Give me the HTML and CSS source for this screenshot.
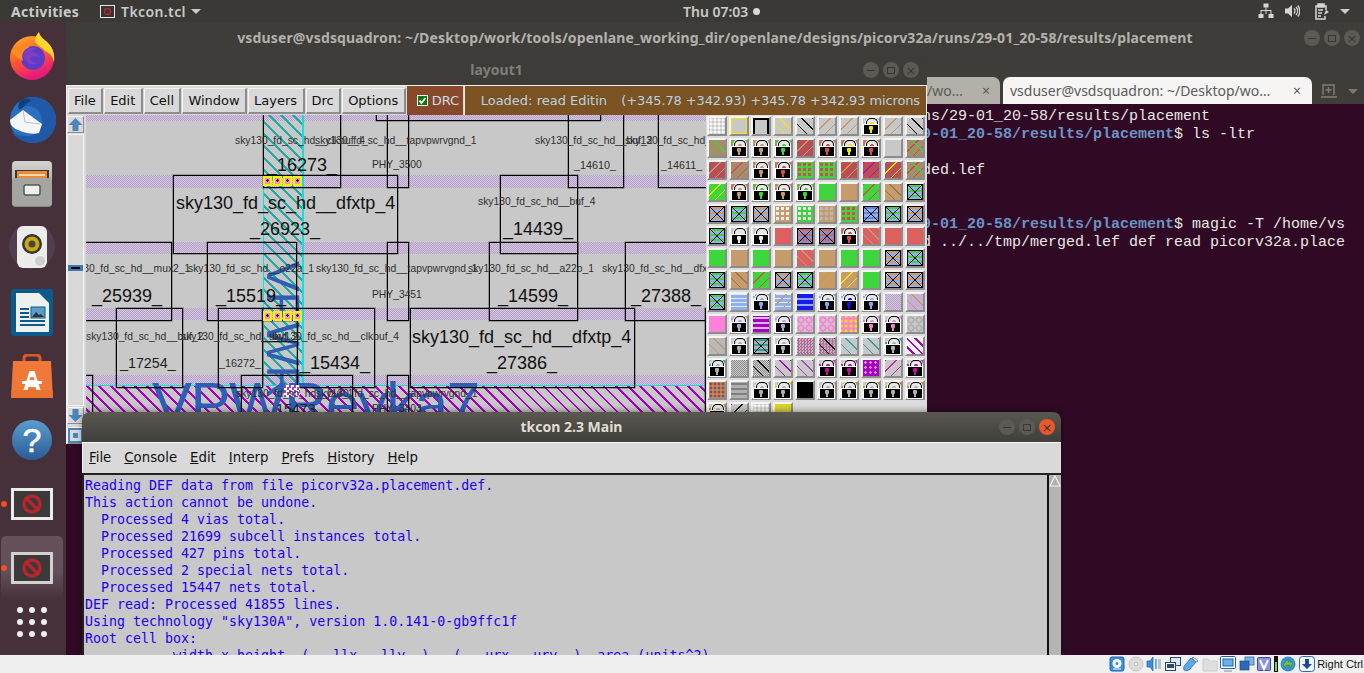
FILE: index.html
```html
<!DOCTYPE html>
<html lang="en">
  <head>
    <meta charset="UTF-8" />
    <title>Tkcon.tcl</title>
    <link rel="stylesheet" href="styles.css">
  </head>
  <body>
    <div class="screen">
      <header class="topbar">
        <span class="activities">Activities</span>
        <span class="app-menu">
          <svg width="15" height="13" viewBox="0 0 15 13"><rect x="0.5" y="0.5" width="14" height="12" fill="#333" stroke="#e8e8e8"/><circle cx="7.5" cy="6.5" r="3" fill="none" stroke="#b8242c" stroke-width="1.5"/></svg>
          Tkcon.tcl
          <i class="caret"></i>
        </span>
        <span class="clock">Thu 07:03<i class="clock-dot"></i></span>
        <span class="tray">
          <svg width="16" height="16" viewBox="0 0 16 16" fill="#d6d6d6"><rect x="5.5" y="0.5" width="5" height="4"/><rect x="0.5" y="11" width="5" height="4"/><rect x="10.5" y="11" width="5" height="4"/><path d="M7.5 4.5h1V7h5v4h-1V8H8.5v3h-1V8H3.5v3h-1V7h5z"/></svg>
          <svg width="16" height="16" viewBox="0 0 16 16" fill="none" stroke="#d6d6d6"><path d="M1 5.5h3L8 2v12l-4-3.500H1z" fill="#d6d6d6" stroke="none"/><path d="M10 5.500a3.500 3.500 0 0 1 0 5M12 4a6 6 0 0 1 0 8M13.800 2.500a8.500 8.500 0 0 1 0 11" stroke-width="1.300"/></svg>
          <svg width="16" height="17" viewBox="0 0 16 17" fill="none" stroke="#d6d6d6" stroke-width="1.500"><path d="M4 3H2v13h9v-3M10 3h2v4"/><rect x="4" y="1" width="6" height="3" fill="#d6d6d6"/><path d="M4 7h5M4 10h4M4 13h3"/><path d="M10 12l5-3-3-2z" fill="#d6d6d6" stroke="none"/></svg>
          <i class="caret"></i>
        </span>
      </header>

      <div class="desk">
        <nav class="dock">
          <div class="dock-item">
            <svg width="48" height="50" viewBox="0 0 48 50">
              <defs><linearGradient id="ffa" x1="0" y1="0" x2="0.4" y2="1"><stop offset="0" stop-color="#ffb52a"/><stop offset="0.55" stop-color="#ff5a2c"/><stop offset="1" stop-color="#e8187c"/></linearGradient></defs>
              <circle cx="24" cy="27" r="22" fill="url(#ffa)"/>
              <path d="M31 1c1 5 5 7 9 11 5 5 7 12 6 19-1-6-5-9-9-11-3-4-9-6-10-10 0-4 2-7 4-9z" fill="#ffd52e"/>
              <circle cx="25" cy="27" r="12" fill="#5d3bc6"/>
              <path d="M17 20c3-4 9-4 12-2-3 0-5 1-6 3 4 0 8 2 9 6-2-2-7-2-10 0 1 3 4 5 8 5-3 2-9 2-12-2-3-3-3-7-1-10z" fill="#7f3fc0"/>
              <path d="M3 21c3-5 6-7 10-8-1 2-1 3 0 4 3-2 6-2 9-1-3 1-6 3-7 6-1 2-1 5 0 8-5-2-9-6-12-9z" fill="#ff8a1f"/>
            </svg>
          </div>
          <div class="dock-item">
            <svg width="48" height="48" viewBox="0 0 48 48">
              <circle cx="25" cy="24" r="23" fill="#2a6fc0"/>
              <path d="M25 1a23 23 0 0 1 20 34c-4 8-12 12-20 12C17 47 8 43 4 36c8 5 20 6 26 0 5-5 5-13 2-19-3-5-8-7-13-7-3 0-6 1-8 3 2-7 7-12 14-12z" fill="#1f5aa8"/>
              <path d="M12 5c4-3 9-3 11 0-4 1-6 3-7 6l-5 3c-1-3-1-7 1-9z" fill="#103f80"/>
              <path d="M2 24l13-10 19 14-3 9c-8 2-20-1-26-6-2-2-3-4-3-7z" fill="#f4f6f8"/>
              <path d="M15 14l2 12 15 2" fill="none" stroke="#b8c4d0"/>
            </svg>
          </div>
          <div class="dock-item">
            <svg width="44" height="48" viewBox="0 0 44 48">
              <defs><linearGradient id="cab" x1="0" y1="0" x2="0" y2="1"><stop offset="0" stop-color="#d4d4d0"/><stop offset="1" stop-color="#8a8a86"/></linearGradient></defs>
              <rect x="2" y="1" width="40" height="46" rx="4" fill="url(#cab)"/>
              <rect x="5" y="10" width="34" height="12" fill="#3c3836"/>
              <rect x="7" y="11" width="30" height="7" fill="#e88c3c"/>
              <rect x="9" y="14" width="26" height="2" fill="#f8d8a8"/>
              <rect x="2" y="18" width="40" height="28" rx="3" fill="#a4a4a0"/>
              <rect x="14" y="25" width="16" height="10" rx="2" fill="#f0f0ec" stroke="#555" stroke-width="1.500"/>
            </svg>
          </div>
          <div class="dock-item">
            <svg width="48" height="44" viewBox="0 0 48 44">
              <circle cx="24" cy="20" r="23" fill="#5a4a66" opacity="0.5"/>
              <rect x="9" y="0" width="30" height="42" rx="6" fill="#ececea"/>
              <circle cx="24" cy="18" r="10" fill="#38362e"/>
              <circle cx="24" cy="18" r="7.500" fill="#c8a818"/>
              <circle cx="24" cy="18" r="3.500" fill="#4a4638"/>
              <circle cx="32" cy="35" r="5" fill="#cfcfcb"/>
            </svg>
          </div>
          <div class="dock-item">
            <svg width="42" height="48" viewBox="0 0 42 48">
              <path d="M3 1h36a3 3 0 0 1 3 3v41a3 3 0 0 1-3 3H3a3 3 0 0 1-3-3V4a3 3 0 0 1 3-3z" fill="#0a5a8c"/>
              <path d="M5 5h23l10 10v29H5z" fill="#eef0ee"/>
              <path d="M28 1h11a3 3 0 0 1 3 3v11z" fill="#0a5a8c"/>
              <rect x="9" y="20" width="9" height="2" fill="#0a5a8c"/><rect x="9" y="24" width="9" height="2" fill="#0a5a8c"/><rect x="9" y="28" width="9" height="2" fill="#0a5a8c"/>
              <rect x="9" y="32" width="25" height="2" fill="#0a5a8c"/><rect x="9" y="36" width="25" height="2" fill="#0a5a8c"/>
              <rect x="20" y="19" width="14" height="11" fill="#5a9cc8" stroke="#0a5a8c"/>
              <path d="M21 29l4-5 3 3 2-1 3 3z" fill="#333"/>
            </svg>
          </div>
          <div class="dock-item">
            <svg width="44" height="44" viewBox="0 0 44 44">
              <path d="M14 9V5q0-4 4-4h8q4 0 4 4v4" fill="none" stroke="#d85a28" stroke-width="3"/>
              <path d="M3 7h38l2 38H1z" fill="#f07838"/>
              <path d="M1 36h42v9H1z" fill="#e87030" opacity="0.7"/>
              <path d="M19.500 17h5l6 19h-4l-1-3H18.500l-1 3h-4zM20.500 23l-1 3h5l-1-3z" fill="#fff"/>
              <rect x="12" y="27" width="20" height="3" fill="#fff"/>
            </svg>
          </div>
          <div class="dock-item">
            <svg width="42" height="42" viewBox="0 0 42 42">
              <defs><linearGradient id="hlp" x1="0" y1="0" x2="0" y2="1"><stop offset="0" stop-color="#5a9cd0"/><stop offset="1" stop-color="#2a5c94"/></linearGradient></defs>
              <circle cx="21" cy="21" r="20" fill="url(#hlp)"/>
              <text x="21" y="33" text-anchor="middle" class="help-mark">?</text>
            </svg>
          </div>
          <div class="dock-item">
            <i class="run-dot"></i>
            <svg width="42" height="32" viewBox="0 0 42 32"><rect x="1.500" y="1.500" width="39" height="29" fill="#3a3a3a" stroke="#ececec" stroke-width="3"/><circle cx="21" cy="16" r="8" fill="none" stroke="#b8242c" stroke-width="3.500"/><path d="M15.500 10.500l11 11" stroke="#b8242c" stroke-width="3.500"/></svg>
          </div>
          <div class="dock-item active">
            <i class="run-dot"></i>
            <svg width="42" height="32" viewBox="0 0 42 32"><rect x="1.500" y="1.500" width="39" height="29" fill="#3a3a3a" stroke="#d4d0d0" stroke-width="3"/><circle cx="21" cy="16" r="8" fill="none" stroke="#b8242c" stroke-width="3.500"/><path d="M15.500 10.500l11 11" stroke="#b8242c" stroke-width="3.500"/></svg>
          </div>
          <div class="dock-grid">
            <svg width="32" height="32" viewBox="0 0 32 32" fill="#eeeeee"><circle cx="4" cy="4" r="3"/><circle cx="16" cy="4" r="3"/><circle cx="28" cy="4" r="3"/><circle cx="4" cy="16" r="3"/><circle cx="16" cy="16" r="3"/><circle cx="28" cy="16" r="3"/><circle cx="4" cy="28" r="3"/><circle cx="16" cy="28" r="3"/><circle cx="28" cy="28" r="3"/></svg>
          </div>
        </nav>

        <main class="workspace">
          <!-- terminal at the back, the other two windows sit on it -->
          <section class="terminal">
            <div class="term-title">
              <span class="term-name">vsduser@vsdsquadron: ~/Desktop/work/tools/openlane_working_dir/openlane/designs/picorv32a/runs/29-01_20-58/results/placement</span>
              <span class="win-btns">
                <i class="win-btn"><b class="glyph-min"></b></i>
                <i class="win-btn"><b class="glyph-max"></b></i>
                <i class="win-btn"><b class="glyph-close">×</b></i>
              </span>
            </div>
            <div class="term-tabs">
              <div class="tab tab-off"><span>/wo…</span><span class="tab-x">×</span></div>
              <div class="tab tab-on"><span>vsduser@vsdsquadron: ~/Desktop/wo…</span><span class="tab-x">×</span></div>
              <svg class="tab-new" width="16" height="16" viewBox="0 0 16 16" fill="none" stroke="#807e78" stroke-width="1.500"><path d="M2 12V2h11v10M0 14h16M7.500 4v6M4.500 7h6"/></svg>
              <i class="caret caret-dim"></i>
            </div>
            <pre class="term-out">ns/29-01_20-58/results/placement
<b>9-01_20-58/results/placement</b>$ ls -ltr

ded.lef


<b>9-01_20-58/results/placement</b>$ magic -T /home/vs
d ../../tmp/merged.lef def read picorv32a.place</pre>
          </section>

          <section class="layout-win">
            <div class="win-title">
              <span class="win-name">layout1</span>
              <span class="win-btns">
                <i class="win-btn"><b class="glyph-min"></b></i>
                <i class="win-btn"><b class="glyph-max"></b></i>
                <i class="win-btn"><b class="glyph-close">×</b></i>
              </span>
            </div>
            <div class="magic-bar">
              <span class="mbtn">File</span>
              <span class="mbtn">Edit</span>
              <span class="mbtn">Cell</span>
              <span class="mbtn">Window</span>
              <span class="mbtn">Layers</span>
              <span class="mbtn">Drc</span>
              <span class="mbtn">Options</span>
              <span class="drc-btn">
                <svg width="11" height="11" viewBox="0 0 11 11"><rect x="0.500" y="0.500" width="10" height="10" fill="#0a7a10" stroke="#f2f2f2"/><path d="M2.500 5.500l2 2.500 4-5" fill="none" stroke="#fff" stroke-width="1.800"/></svg>
                DRC
              </span>
              <span class="info-bar"><span>Loaded: read Editin</span><span class="info-pos">(+345.78 +342.93) +345.78 +342.93 microns</span></span>
            </div>
            <div class="magic-body">
              <div class="scroll-col">
                <span class="sbtn"><svg width="15" height="15" viewBox="0 0 15 15"><path d="M7.500 1l7 7h-4v6h-6V8h-4z" fill="#4a86bc"/></svg></span>
                <div class="strough"><i class="smark"></i></div>
                <span class="sbtn"><svg width="15" height="15" viewBox="0 0 15 15"><path d="M7.500 14l7-7h-4V1h-6v6h-4z" fill="#4a86bc"/></svg></span>
                <span class="sbtn sbtn-zoom"><svg width="15" height="15" viewBox="0 0 15 15"><rect x="1" y="1" width="13" height="13" fill="none" stroke="#4a86bc" stroke-width="2"/><rect x="5" y="5" width="5" height="5" fill="#4a86bc"/></svg></span>
              </div>

              <div class="canvas">
                <i class="rail rail-1"></i>
                <i class="rail rail-2"></i>
                <i class="rail rail-3"></i>
                <i class="rail rail-4"></i>
                <i class="rail rail-5"></i>
                <i class="met-strip"></i>
                <i class="met-floor"></i>

                <span class="vtext">VPWR</span>
                <span class="floor-text">VPWReyka7</span>

                <i class="cell c-16273"></i>
                <i class="cell c-top1"></i>
                <i class="cell c-tap1"></i>
                <i class="cell c-26923"></i>
                <i class="cell c-14610"></i>
                <i class="cell c-14611"></i>
                <i class="cell c-14439"></i>
                <i class="cell c-14599"></i>
                <i class="cell c-27388"></i>
                <i class="cell c-25939"></i>
                <i class="cell c-15519"></i>
                <i class="cell c-tap2"></i>
                <i class="cell c-17254"></i>
                <i class="cell c-16272"></i>
                <i class="cell c-mid"></i>
                <i class="cell c-15434"></i>
                <i class="cell c-15473"></i>
                <i class="cell c-tap3"></i>
                <i class="cell c-edge"></i>
                <i class="cell c-27386"></i>
                <i class="cell c-right"></i>

                <span class="vias vias-1"><i></i><i></i><i></i><i></i></span>
                <span class="vias vias-2"><i></i><i></i><i></i><i></i></span>
                <span class="pin-mark"></span>

                <span class="lab t1">sky130_fd_sc_hd__clkbuf_4</span>
                <span class="lab t2">sky130_fd_sc_hd__tapvpwrvgnd_1</span>
                <span class="lab t3">sky130_fd_sc_hd__buf_2</span>
                <span class="lab t4">sky130_fd_sc_hd__dfxtp_4</span>
                <span class="lab t5">PHY_3500</span>
                <span class="lab lab-id t6">_14610_</span>
                <span class="lab lab-id t7">_14611_</span>
                <span class="lab t8">sky130_fd_sc_hd__buf_4</span>
                <span class="lab t9">sky130_fd_sc_hd__mux2_1</span>
                <span class="lab t10">sky130_fd_sc_hd__o22a_1</span>
                <span class="lab t11">sky130_fd_sc_hd__tapvpwrvgnd_1</span>
                <span class="lab t12">sky130_fd_sc_hd__a22o_1</span>
                <span class="lab t13">sky130_fd_sc_hd__dfxtp_4</span>
                <span class="lab t14">PHY_3451</span>
                <span class="lab t15">sky130_fd_sc_hd__buf_2</span>
                <span class="lab t16">sky130_fd_sc_hd__buf_2</span>
                <span class="lab t17">sky130_fd_sc_hd__clkbuf_4</span>
                <span class="lab lab-id t18">_16272_</span>
                <span class="lab t19">sky130_fd_sc_hd__buf_1</span>
                <span class="lab t20">sky130_fd_sc_hd__tapvpwrvgnd_1</span>
                <span class="lab t21">PHY_3403</span>
                <span class="lab lab-md t22">_17254_</span>
                <span class="lab lab-md t23">_15473_</span>
                <span class="lab lab-lg t24">_16273_</span>
                <span class="lab lab-lg t25">sky130_fd_sc_hd__dfxtp_4</span>
                <span class="lab lab-lg t26">_26923_</span>
                <span class="lab lab-lg t27">_14439_</span>
                <span class="lab lab-lg t28">_25939_</span>
                <span class="lab lab-lg t29">_15519_</span>
                <span class="lab lab-lg t30">_14599_</span>
                <span class="lab lab-lg t31">_27388_</span>
                <span class="lab lab-lg t32">_15434_</span>
                <span class="lab lab-lg t33">sky130_fd_sc_hd__dfxtp_4</span>
                <span class="lab lab-lg t34">_27386_</span>
              </div>

              <div class="palette">
                <i class="sw dots"></i><i class="sw ybox"></i><i class="sw kbox"></i><i class="sw hb h-y"></i><i class="sw hb h-k"></i><i class="sw hf h-t"></i><i class="sw hf h-t"></i><i class="sw lk h-y"></i><i class="sw hf h-t"></i><i class="sw hb h-k"></i>
                <i class="sw b-brown hb h-g"></i><i class="sw lk sp-g h-t"></i><i class="sw lk sp-t h-t"></i><i class="sw lk sp-g h-g"></i><i class="sw b-dkred hf h-t"></i><i class="sw lk sp-r h-r"></i><i class="sw lk sp-r h-y"></i><i class="sw lk sp-r h-r"></i><i class="sw"></i><i class="sw b-brown hx h-g"></i>
                <i class="sw b-dkred hf h-t"></i><i class="sw b-brown hf h-r"></i><i class="sw lk sp-t h-t"></i><i class="sw lk sp-r h-r"></i><i class="sw b-green rdots"></i><i class="sw b-green rdots"></i><i class="sw b-dkred hf h-o"></i><i class="sw b-dkred hf h-m"></i><i class="sw b-dkred hf h-y"></i><i class="sw b-brown hx h-g"></i>
                <i class="sw b-green hf h-y"></i><i class="sw lk sp-r h-t"></i><i class="sw lk sp-g h-g"></i><i class="sw lk sp-t h-t"></i><i class="sw lk sp-g h-g"></i><i class="sw b-green"></i><i class="sw b-tan"></i><i class="sw b-green hf h-r"></i><i class="sw b-tan hb h-dt"></i><i class="sw xb xg"></i>
                <i class="sw xb xo"></i><i class="sw xb xg"></i><i class="sw xb xo"></i><i class="sw b-tan wdots"></i><i class="sw b-green wdots"></i><i class="sw b-tan gdots"></i><i class="sw b-green rdots"></i><i class="sw xb xb2"></i><i class="sw xb xg"></i><i class="sw xb xo"></i>
                <i class="sw xb xg"></i><i class="sw lk h-w"></i><i class="sw lk h-w"></i><i class="sw b-coral"></i><i class="sw xb xr"></i><i class="sw xb xr"></i><i class="sw lk sp-r h-r"></i><i class="sw b-coral hb h-t"></i><i class="sw b-coral"></i><i class="sw b-coral"></i>
                <i class="sw b-green"></i><i class="sw b-tan"></i><i class="sw b-green"></i><i class="sw b-tan"></i><i class="sw b-coral hb h-t"></i><i class="sw b-tan"></i><i class="sw b-green"></i><i class="sw b-green"></i><i class="sw xb xo"></i><i class="sw xb xg"></i>
                <i class="sw xb xg"></i><i class="sw b-tan hb h-dt"></i><i class="sw b-green hf h-r"></i><i class="sw xb xo"></i><i class="sw xb xg"></i><i class="sw b-tan hf h-o"></i><i class="sw b-tan hf h-y"></i><i class="sw b-green"></i><i class="sw xb xo"></i><i class="sw xb xo"></i>
                <i class="sw xb xg"></i><i class="sw b-blue waves"></i><i class="sw lk sp-b h-b"></i><i class="sw b-blue waves hf h-t"></i><i class="sw deep"></i><i class="sw lk sp-b h-b"></i><i class="sw lk sp-b h-db"></i><i class="sw lk sp-b h-b"></i><i class="sw b-lilac"></i><i class="sw b-lilac hb h-t"></i>
                <i class="sw pinkfill"></i><i class="sw lk sp-l h-l"></i><i class="sw purplewave"></i><i class="sw lk sp-l h-l"></i><i class="sw rings"></i><i class="sw rings"></i><i class="sw yellowpink"></i><i class="sw lk sp-p h-p"></i><i class="sw lk sp-p h-p"></i><i class="sw rings-grey"></i>
                <i class="sw hb h-t dith"></i><i class="sw lk h-gr"></i><i class="sw xb xteal"></i><i class="sw lk h-gr"></i><i class="sw pinkdith"></i><i class="sw pinkdith hb h-k"></i><i class="sw hb h-teal"></i><i class="sw hb h-teal2"></i><i class="sw lk sp-c h-gr"></i><i class="sw magdots"></i>
                <i class="sw lk sp-c h-gr"></i><i class="sw dith2"></i><i class="sw dith2 hb h-k"></i><i class="sw hb h-mag"></i><i class="sw hb h-mag2"></i><i class="sw lk sp-m h-m"></i><i class="sw lk sp-m h-m"></i><i class="sw purplefill"></i><i class="sw hf h-pk"></i><i class="sw lk sp-m h-m"></i>
                <i class="sw orangepurple"></i><i class="sw dith2 waves-grey"></i><i class="sw lk h-gr"></i><i class="sw lk sp-y h-gr"></i><i class="sw b-black"></i><i class="sw lk h-gr"></i><i class="sw lk sp-o h-gr"></i><i class="sw lk sp-o h-gr"></i><i class="sw lk sp-o h-gr"></i><i class="sw lk sp-o h-gr"></i>
                <i class="sw lk sp-o h-gr"></i><i class="sw hf h-k"></i><i class="sw dots"></i><i class="sw ydots"></i>
              </div>
            </div>
          </section>

          <section class="tkcon-win">
            <div class="win-title tk-title">
              <span class="tk-name">tkcon 2.3 Main</span>
              <span class="win-btns">
                <i class="win-btn"><b class="glyph-min"></b></i>
                <i class="win-btn"><b class="glyph-max"></b></i>
                <i class="win-btn win-close"><b class="glyph-close">×</b></i>
              </span>
            </div>
            <div class="tk-menu">
              <span><u>F</u>ile</span>
              <span><u>C</u>onsole</span>
              <span><u>E</u>dit</span>
              <span><u>I</u>nterp</span>
              <span><u>P</u>refs</span>
              <span><u>H</u>istory</span>
              <span><u>H</u>elp</span>
            </div>
            <div class="tk-body">
              <pre class="tk-text">Reading DEF data from file picorv32a.placement.def.
This action cannot be undone.
  Processed 4 vias total.
  Processed 21699 subcell instances total.
  Processed 427 pins total.
  Processed 2 special nets total.
  Processed 15447 nets total.
DEF read: Processed 41855 lines.
Using technology "sky130A", version 1.0.141-0-gb9ffc1f
Root cell box:
           width x height  (   llx,  lly  ),  (   urx,  ury  )  area (units^2)</pre>
              <div class="tk-scroll"><svg width="12" height="12" viewBox="0 0 12 12"><path d="M6 1l5 10H1z" fill="#b0b0b0" stroke="#f2f2f2" stroke-width="1.200"/></svg></div>
            </div>
          </section>
        </main>
      </div>

      <footer class="vbox-bar">
        <svg width="16" height="16" viewBox="0 0 16 16"><rect x="1" y="1" width="14" height="14" rx="2" fill="#3a8fdc" stroke="#1c62a8"/><circle cx="8" cy="7.500" r="4.500" fill="#fff"/><circle cx="8" cy="7.500" r="1.500" fill="#3a8fdc"/><path d="M4 13h8" stroke="#fff"/></svg>
        <svg width="16" height="16" viewBox="0 0 16 16"><circle cx="8" cy="8" r="7" fill="#dcdcdc" stroke="#c4c4c4"/><circle cx="8" cy="8" r="2" fill="#f4f4f4" stroke="#bcbcbc"/></svg>
        <svg width="16" height="16" viewBox="0 0 16 16"><path d="M1 5h3l3-4v14l-3-4H1z" fill="#3a8fdc" stroke="#1c62a8" stroke-width="0.700"/><rect x="9" y="3" width="2" height="10" fill="#6ab0e8"/><rect x="12" y="3" width="3" height="10" fill="#c0c0c0"/></svg>
        <svg width="16" height="16" viewBox="0 0 16 16"><rect x="5.500" y="1.500" width="10" height="8" fill="#dfe8f4" stroke="#2c4a70"/><rect x="0.500" y="6.500" width="10" height="8" fill="#f4f4f4" stroke="#2c4a70"/><rect x="2" y="8" width="7" height="4" fill="#2c4a70"/></svg>
        <svg width="16" height="16" viewBox="0 0 16 16"><path d="M1 14c-1-2 0-4 1-5l6-7 5 4-6 7c-2 2-4 2-6 1z" fill="#5aa8ec" stroke="#1c62a8" stroke-width="0.700"/><path d="M10 1l5 4-2 1-4-4z" fill="#fff" stroke="#1c62a8" stroke-width="0.700"/></svg>
        <svg width="16" height="16" viewBox="0 0 16 16"><path d="M1 3h5l1 2h8v10H1z" fill="#dedede" stroke="#cccccc"/></svg>
        <svg width="16" height="16" viewBox="0 0 16 16"><rect x="0.500" y="0.500" width="15" height="12" rx="1" fill="#fff" stroke="#1c62a8"/><rect x="3" y="3" width="10" height="7" fill="#6ab0e8" stroke="#1c62a8"/><path d="M4 15h8" stroke="#bcbcbc" stroke-width="2"/></svg>
        <svg width="16" height="16" viewBox="0 0 16 16"><rect x="6" y="1" width="9" height="8" fill="#7ab4ec" stroke="#2c5a90" stroke-width="0.700"/><rect x="1" y="5" width="9" height="9" fill="#2c6ab8" stroke="#1c4a80" stroke-width="0.700"/></svg>
        <svg width="14" height="16" viewBox="0 0 14 16"><rect x="0.500" y="1.500" width="13" height="13" rx="1" fill="#8a94dc" stroke="#3c4a9c"/><path d="M3 4l4 9 4-9" fill="none" stroke="#fff" stroke-width="2"/></svg>
        <svg width="4" height="16" viewBox="0 0 4 16"><rect width="4" height="16" fill="#111"/><rect x="1" y="6" width="2" height="9" fill="#7cd81c"/></svg>
        <svg width="16" height="16" viewBox="0 0 16 16"><circle cx="8" cy="8" r="7.500" fill="#3a8fdc"/><path d="M3 9l5-6v3h5l-3 8V9H6v3z" fill="#72c83c" stroke="#3c8a20" stroke-width="0.600"/></svg>
        <svg width="16" height="16" viewBox="0 0 16 16"><rect x="0.500" y="0.500" width="15" height="15" rx="3" fill="#f2f6fc" stroke="#2c6ab8"/><path d="M6 3h4v5h3l-5 5-5-5h3z" fill="#1c4a98"/></svg>
        <span class="host-key">Right Ctrl</span>
      </footer>
    </div>
  </body>
</html>
```
FILE: styles.css
```css
* {
  box-sizing: border-box;
}
html,
body {
  margin: 0;
  height: 100%;
  overflow: hidden;
  background: #300a24;
}
.screen {
  width: 1364px;
  height: 673px;
  display: flex;
  flex-direction: column;
  font-family: "DejaVu Sans", sans-serif;
}

/* top bar */
.topbar {
  height: 22px;
  flex: none;
  background: #3a3935;
  color: #c9cbca;
  display: flex;
  align-items: center;
  font: bold 14px "Noto Sans", sans-serif;
  padding-left: 11px;
  position: relative;
}
.activities {
  letter-spacing: 0.3px;
}
.app-menu {
  display: flex;
  align-items: center;
  gap: 6px;
  margin-left: 21px;
  font-weight: 600;
  letter-spacing: 0.4px;
}
.caret {
  display: inline-block;
  width: 0;
  height: 0;
  border-left: 5px solid transparent;
  border-right: 5px solid transparent;
  border-top: 5px solid #c9cbca;
}
.app-menu .caret {
  margin-left: -1px;
}
.clock {
  position: absolute;
  left: 683px;
  display: flex;
  align-items: center;
  font-weight: 600;
}
.clock-dot {
  width: 7px;
  height: 7px;
  border-radius: 50%;
  background: #d8d8d8;
  margin-left: 5px;
}
.tray {
  margin-left: auto;
  margin-right: 14px;
  display: flex;
  align-items: center;
  gap: 10px;
}
.tray svg:nth-child(3) {
  margin-left: 4px;
}

/* dock */
.desk {
  flex: 1;
  display: flex;
  min-height: 0;
  overflow: hidden;
}
.dock {
  width: 66px;
  flex: none;
  background: #46313b;
  padding-top: 2px;
  display: flex;
  flex-direction: column;
  align-items: stretch;
}
.dock-item {
  height: 64px;
  flex: none;
  display: flex;
  align-items: center;
  justify-content: center;
  position: relative;
  margin-right: 3px;
  margin-left: 1px;
}
.dock-item.active {
  background: linear-gradient(#64505a 0 55%, #46313b);
  border-radius: 5px 5px 0 0;
}
.run-dot {
  position: absolute;
  left: 0;
  top: 29px;
  width: 6px;
  height: 6px;
  border-radius: 50%;
  background: #e95420;
}
.dock-grid {
  height: 44px;
  display: flex;
  align-items: center;
  justify-content: center;
  margin-right: 2px;
}
.help-mark {
  font: 34px "Liberation Sans", sans-serif;
  fill: #fff;
  stroke: #fff;
  stroke-width: 0.6px;
}

/* desktop area */
.workspace {
  flex: 1;
  position: relative;
  min-width: 0;
}
.terminal {
  height: 100%;
  display: flex;
  flex-direction: column;
  background: #300a24;
}
.term-title {
  height: 56px;
  flex: none;
  background: #3e3d39;
  display: flex;
  padding-top: 6px;
  justify-content: center;
  position: relative;
}
.term-name {
  font: bold 14px "Noto Sans", sans-serif;
  letter-spacing: 0.15px;
  color: #b3b1ac;
  line-height: 20px;
}
.win-btns {
  position: absolute;
  right: 4px;
  top: 8px;
  display: flex;
  gap: 4px;
}
.win-btn {
  width: 16px;
  height: 16px;
  border-radius: 50%;
  background: #5b5a55;
  display: flex;
  align-items: center;
  justify-content: center;
  color: #38372f;
}
.glyph-min {
  width: 8px;
  height: 1px;
  background: #38372f;
}
.glyph-max {
  width: 8px;
  height: 7px;
  border: 1px solid #38372f;
}
.glyph-close {
  font: 13px/1 "DejaVu Sans", sans-serif;
}
.win-close {
  background: #e9572a;
}
.term-tabs {
  height: 26px;
  flex: none;
  background: #3e3d39;
  display: flex;
  align-items: flex-end;
  font: 14px "Noto Sans", sans-serif;
  position: relative;
}
.tab {
  height: 27px;
  display: flex;
  align-items: center;
  justify-content: space-between;
  border-radius: 7px 7px 0 0;
  color: #5b5b5b;
}
.tab-off {
  width: 934px;
  background: #b3b0aa;
  padding: 0 10px 0 861px;
}
.tab-on {
  width: 309px;
  margin-left: 3px;
  background: #f6f5f4;
  padding: 0 11px 0 7px;
}
.tab-x {
  font-size: 14px;
}
.tab-new {
  margin: 0 0 5px 9px;
}
.caret-dim {
  border-top-color: #7a7872;
  margin: 0 0 10px 11px;
}
.term-out {
  margin: 0;
  padding: 4px 0 0 856px;
  font: 15px/18px "Liberation Mono", monospace;
  color: #e8e8e4;
}
.term-out b {
  color: #6b94c6;
}

/* magic layout window */
.layout-win {
  position: absolute;
  left: 0;
  top: 33px;
  width: 861px;
  height: 389px;
  display: flex;
  flex-direction: column;
}
.win-title {
  height: 30px;
  flex: none;
  background: #3d3c38;
  border-radius: 8px 8px 0 0;
  display: flex;
  align-items: center;
  justify-content: center;
  position: relative;
}
.win-title .win-btns {
  top: 7px;
  right: 8px;
}
.win-name {
  font: bold 14px "Noto Sans", sans-serif;
  color: #7f7e79;
  margin-top: -1px;
}
.magic-bar {
  height: 30px;
  flex: none;
  background: #d9d9d9;
  border: 1px solid #f2f2f2;
  border-bottom: 0;
  display: flex;
  gap: 1px;
  padding-left: 1px;
  font-size: 13px;
  color: #111;
}
.mbtn {
  display: flex;
  align-items: center;
  margin: 2px 0 1px;
  padding: 0 5.400px 0 5px;
  border-style: solid;
  border-width: 1px 2px 2px 1px;
  border-color: #f4f4f4 #8c8c8c #8c8c8c #f4f4f4;
  background: #d9d9d9;
}
.drc-btn {
  width: 56px;
  flex: none;
  display: flex;
  align-items: center;
  gap: 4px;
  padding-left: 10px;
  background: #864a2b;
  color: #cfdbe4;
}
.info-bar {
  flex: 1;
  display: flex;
  justify-content: space-between;
  align-items: center;
  background: #7b5221;
  color: #b8d2e2;
  padding: 0 6px 0 16px;
  border-left: 1px solid #e8e8e8;
}
.info-pos {
  letter-spacing: -0.12px;
}
.magic-body {
  flex: 1;
  display: flex;
  min-height: 0;
  background: #d9d9d9;
  border-left: 1px solid #f2f2f2;
}
.scroll-col {
  width: 19px;
  flex: none;
  display: flex;
  flex-direction: column;
  padding-top: 1px;
  gap: 1px;
}
.sbtn {
  width: 17px;
  height: 17px;
  flex: none;
  border-style: solid;
  border-width: 1px;
  border-color: #f4f4f4 #8c8c8c #8c8c8c #f4f4f4;
  display: block;
}
.sbtn svg {
  display: block;
}
.sbtn-zoom {
  margin-top: 2px;
}
.strough {
  flex: 1;
  width: 17px;
  border: 1px solid #f4f4f4;
  position: relative;
}
.smark {
  position: absolute;
  left: 0;
  right: 0;
  top: 130px;
  height: 6px;
  background: #3c78b4;
}
.smark::after {
  content: "";
  position: absolute;
  left: 3px;
  right: 3px;
  top: 2px;
  height: 2px;
  background: #000;
}

/* layout canvas, origin 86,115 on the screen */
.canvas {
  width: 620px;
  flex: none;
  position: relative;
  overflow: hidden;
  background: #c8c8c8;
}
.rail {
  position: absolute;
  left: 0;
  right: 0;
  background: repeating-conic-gradient(#b79ed1 0 25%, #d2c8d6 0 50%) 0 0 / 2px 2px;
}
.rail-1 { top: 0; height: 6px; }
.rail-2 { top: 60px; height: 13px; }
.rail-3 { top: 127px; height: 12px; }
.rail-4 { top: 193px; height: 12px; }
.rail-5 { top: 260px; height: 10px; }
.met-strip {
  position: absolute;
  left: 177px;
  top: 0;
  width: 41px;
  height: 270px;
  border-left: 1px solid #10e0dc;
  border-right: 2px solid #10e0dc;
  background: repeating-linear-gradient(45deg, transparent 0 6.500px, #22aaa6 6.500px 8.500px);
}
.met-floor {
  position: absolute;
  left: 0;
  right: 0;
  top: 270px;
  bottom: 0;
  border-top: 1px solid #10e0dc;
  background: #c8c8c8 repeating-linear-gradient(45deg, transparent 0 6.500px, #a800c0 6.500px 8.500px);
}
.vtext {
  position: absolute;
  left: 174px;
  top: 146px;
  font: 46px/46px "Liberation Sans", sans-serif;
  writing-mode: vertical-rl;
  color: #2e5fb4;
}
.floor-text {
  position: absolute;
  left: 66px;
  top: 259px;
  font: 60px/60px "Liberation Sans", sans-serif;
  white-space: nowrap;
  letter-spacing: -1.500px;
  color: #2e5fb4;
}
.cell {
  position: absolute;
  border: 1px solid #000;
  box-shadow: 0 0 0 0.500px rgba(0, 0, 0, 0.5);
}
.c-16273 { left: 177px; top: -20px; width: 78px; height: 93px; }
.c-top1 { left: 290px; top: -20px; width: 225px; height: 26px; }
.c-tap1 { left: 301px; top: -20px; width: 22px; height: 93px; }
.c-26923 { left: 87px; top: 60px; width: 225px; height: 79px; }
.c-14610 { left: 482px; top: -20px; width: 56px; height: 93px; }
.c-14611 { left: 572px; top: -20px; width: 70px; height: 93px; }
.c-14439 { left: 414px; top: 60px; width: 78px; height: 79px; }
.c-14599 { left: 403px; top: 127px; width: 89px; height: 79px; }
.c-27388 { left: 539px; top: 127px; width: 100px; height: 79px; }
.c-25939 { left: -20px; top: 127px; width: 106px; height: 79px; }
.c-15519 { left: 121px; top: 127px; width: 90px; height: 79px; }
.c-tap2 { left: 301px; top: 127px; width: 22px; height: 79px; }
.c-17254 { left: 30px; top: 193px; width: 67px; height: 80px; }
.c-16272 { left: 132px; top: 193px; width: 45px; height: 80px; }
.c-mid { left: 176px; top: 193px; width: 36px; height: 34px; }
.c-15434 { left: 211px; top: 193px; width: 78px; height: 80px; }
.c-15473 { left: 155px; top: 260px; width: 112px; height: 80px; }
.c-tap3 { left: 301px; top: 260px; width: 22px; height: 80px; }
.c-edge { left: -20px; top: 260px; width: 27px; height: 80px; }
.c-27386 { left: 324px; top: 193px; width: 225px; height: 80px; }
.c-right { left: 619px; top: 193px; width: 30px; height: 120px; }
.vias {
  position: absolute;
  left: 177px;
  display: flex;
  gap: 1px;
}
.vias i {
  width: 9px;
  height: 10px;
  background: #ff8ad8 radial-gradient(#222 1px, transparent 1.500px) 0 0 / 5px 5px;
  border: 2px solid #f4f400;
}
.vias-1 { top: 61px; }
.vias-2 { top: 196px; }
.pin-mark {
  position: absolute;
  left: 198px;
  top: 270px;
  width: 16px;
  height: 12px;
  background: repeating-conic-gradient(#fff 0 25%, #a040c0 0 50%) 0 0 / 5px 5px;
}
.lab {
  position: absolute;
  white-space: nowrap;
  line-height: 1;
  font-family: "Liberation Sans", sans-serif;
  font-size: 10.300px;
  color: #2e2e2e;
}
.lab-id { font-size: 10.800px; }
.lab-md { font-size: 14.300px; color: #1e1e1e; }
.lab-lg { font-size: 18px; color: #111; }
.t1 { left: 149px; top: 21px; }
.t2 { left: 229px; top: 21px; }
.t3 { left: 449px; top: 21px; }
.t4 { left: 539px; top: 21px; }
.t5 { left: 286px; top: 45px; }
.t6 { left: 488px; top: 45px; }
.t7 { left: 575px; top: 45px; }
.t8 { left: 392px; top: 82px; }
.t9 { left: -24px; top: 149px; }
.t10 { left: 102px; top: 149px; }
.t11 { left: 230px; top: 149px; }
.t12 { left: 382px; top: 149px; }
.t13 { left: 516px; top: 149px; }
.t14 { left: 286px; top: 175px; }
.t15 { left: 0; top: 217px; }
.t16 { left: 95px; top: 217px; }
.t17 { left: 183px; top: 217px; }
.t18 { left: 133px; top: 243px; }
.t19 { left: 150px; top: 274px; }
.t20 { left: 230px; top: 274px; }
.t21 { left: 286px; top: 289px; }
.t22 { left: 34px; top: 241px; }
.t23 { left: 182px; top: 287px; }
.t24 { left: 181px; top: 41px; }
.t25 { left: 90px; top: 79px; }
.t26 { left: 164px; top: 105px; }
.t27 { left: 417px; top: 105px; }
.t28 { left: 6px; top: 172px; }
.t29 { left: 130px; top: 172px; }
.t30 { left: 412px; top: 172px; }
.t31 { left: 545px; top: 172px; }
.t32 { left: 214px; top: 239px; }
.t33 { left: 326px; top: 213px; }
.t34 { left: 401px; top: 239px; }

/* layer palette */
.palette {
  flex: 1;
  display: grid;
  grid-template-columns: repeat(10, 20px);
  grid-auto-rows: 20px;
  gap: 2px;
  padding: 1px 0 0 1px;
  background: #dcdcdc;
  overflow: hidden;
  align-content: start;
}
.sw {
  --h: #000;
  display: block;
  position: relative;
  background-color: #c8c8c8;
  border: 2px solid;
  border-color: #f4f4f4 #8c8c8c #8c8c8c #f4f4f4;
}
.hb {
  background-image: repeating-linear-gradient(45deg, transparent 0 6.500px, var(--h) 6.500px 7.500px);
}
.hf {
  background-image: repeating-linear-gradient(-45deg, transparent 0 6.500px, var(--h) 6.500px 7.500px);
}
.hx {
  background-image: repeating-linear-gradient(45deg, transparent 0 6.500px, var(--h) 6.500px 7.500px), repeating-linear-gradient(-45deg, transparent 0 6.500px, #c44a4a 6.500px 7.500px);
}
.h-y { --h: #f0e800; }
.h-k { --h: #000; }
.h-t { --h: #c49a6c; }
.h-dt { --h: #9a7648; }
.h-g { --h: #3cd43c; }
.h-r { --h: #d84a50; }
.h-o { --h: #d89a20; }
.h-m { --h: #c0109a; }
.h-w { --h: #e8e8e8; }
.h-gr { --h: #b0b0b0; }
.h-b { --h: #88a8e8; }
.h-db { --h: #1010f0; }
.h-l { --h: #b8a0d8; }
.h-p { --h: #f080d0; }
.h-teal { --h: #20a8a8; }
.h-teal2 { --h: #20a098; }
.h-mag { --h: #a800c0; }
.h-mag2 { --h: #b040b0; }
.h-pk { --h: #d020a8; }
.b-brown { background-color: #a98a6a; }
.b-tan { background-color: #c69c6d; }
.b-dkred { background-color: #b84e58; }
.b-green { background-color: #3dd63d; }
.b-coral { background-color: #dc6060; }
.b-blue { background-color: #8fb0ea; }
.b-lilac { background: repeating-conic-gradient(#b79ed1 0 25%, #d2c8d6 0 50%) 0 0 / 2px 2px; }
.b-lilac.hb { background-image: repeating-linear-gradient(45deg, transparent 0 6.500px, #c49a6c 6.500px 7.500px); background-size: auto; background-color: #c3b0d3; }
.b-black { background-color: #000; }
.dots {
  background-image: radial-gradient(#f8f8f8 1.400px, transparent 1.800px);
  background-size: 4px 4px;
}
.wdots, .gdots, .rdots {
  background-size: 5px 5px;
}
.wdots { background-image: radial-gradient(#f0f0f0 1.600px, transparent 2px); }
.gdots { background-image: radial-gradient(#b8b8b8 1.600px, transparent 2px); }
.rdots { background-image: radial-gradient(#d84a50 1.500px, transparent 2px); }
.ybox { box-shadow: inset 0 0 0 1px #f0e800; }
.kbox { box-shadow: inset 2px 2px 0 #000, inset -2px 0 0 #000; }
.xb {
  --band: #d89a50;
  background-color: #8fb0ea;
  box-shadow: inset 0 0 0 1px #000;
  background-image:
    linear-gradient(to top right, transparent 47%, #000 47% 53%, transparent 53%),
    linear-gradient(to bottom right, transparent 47%, #000 47% 53%, transparent 53%),
    repeating-linear-gradient(0deg, transparent 0 3px, var(--band) 3px 5px);
}
.xg { --band: #3dd63d; }
.xo { --band: #d89a50; }
.xb2 { --band: #5a8ae0; }
.xr { --band: #dc6060; background-color: #7f8fd8; }
.xteal { --band: #20a8a8; background-color: #b0b0b0; }
.waves {
  background-image: repeating-linear-gradient(0deg, transparent 0 3px, #dfe8f8 3px 4px);
}
.waves.hf {
  background-image: repeating-linear-gradient(-45deg, transparent 0 6.500px, #c49a6c 6.500px 7.500px), repeating-linear-gradient(0deg, transparent 0 3px, #dfe8f8 3px 4px);
}
.deep {
  background: #1a1af0 repeating-linear-gradient(0deg, transparent 0 4px, #8fb0ea 4px 6px);
}
.pinkfill { background: #ff80d8; }
.purplewave {
  background: #a800c0 repeating-linear-gradient(0deg, transparent 0 3px, #d8b8e0 3px 5px);
}
.rings, .rings-grey {
  background-size: 8px 8px;
  background-image: radial-gradient(transparent 1.500px, var(--ring) 1.800px 3.500px, transparent 3.800px);
  --ring: #ff80d8;
}
.rings-grey { --ring: #b0b0b0; }
.yellowpink {
  background: #f0e800 radial-gradient(#ff80d8 2px, transparent 2.500px) 0 0 / 5px 5px;
}
.dith {
  background-color: #b8b8b8;
}
.dith2 {
  background: repeating-conic-gradient(#888 0 25%, #cfcfcf 0 50%) 0 0 / 2px 2px;
}
.dith2.hb {
  background-image: repeating-linear-gradient(45deg, transparent 0 6.500px, #000 6.500px 7.500px), repeating-conic-gradient(#888 0 25%, #cfcfcf 0 50%);
  background-size: auto, 2px 2px;
}
.pinkdith {
  background: repeating-conic-gradient(#c060a0 0 25%, #b8b8b8 0 50%) 0 0 / 3px 3px;
}
.pinkdith.hb {
  background-image: repeating-linear-gradient(45deg, transparent 0 6.500px, #000 6.500px 7.500px), repeating-conic-gradient(#c060a0 0 25%, #b8b8b8 0 50%);
  background-size: auto, 3px 3px;
}
.magdots {
  background: #f4f4f4 repeating-linear-gradient(45deg, transparent 0 4px, #a800c0 4px 6px);
}
.purplefill {
  background: #a800c0 radial-gradient(#e090e0 1px, transparent 1.500px) 0 0 / 5px 5px;
}
.orangepurple {
  background: #c8961c radial-gradient(#8a3cb0 1.300px, transparent 1.700px) 0 0 / 4px 4px;
}
.waves-grey {
  background: #b0b0b0 repeating-linear-gradient(0deg, transparent 0 3px, #808080 3px 5px);
}
.ydots {
  background: #c8c8c8 radial-gradient(#e0d800 1.500px, transparent 2px) 0 0 / 4px 4px;
  box-shadow: inset 0 0 0 1px #e0d800;
}

/* locked layers: arch and body are plain css boxes */
.lk {
  background-color: #c8c8c8;
}
.sp-g { background: repeating-conic-gradient(#3dd63d 0 25%, #a98a6a 0 50%) 0 0 / 4px 4px; }
.sp-t { background: repeating-conic-gradient(#c69c6d 0 25%, #a98a6a 0 50%) 0 0 / 4px 4px; }
.sp-r { background: repeating-conic-gradient(#dc6060 0 25%, #a98a6a 0 50%) 0 0 / 4px 4px; }
.sp-b { background: repeating-conic-gradient(#8fb0ea 0 25%, #dfe8f8 0 50%) 0 0 / 4px 4px; }
.sp-l { background: repeating-conic-gradient(#b79ed1 0 25%, #d2c8d6 0 50%) 0 0 / 4px 4px; }
.sp-p { background: repeating-conic-gradient(#f080d0 0 25%, #c8c8c8 0 50%) 0 0 / 8px 8px; }
.sp-c { background: repeating-conic-gradient(#20a8a8 0 25%, #c8c8c8 0 50%) 0 0 / 8px 8px; }
.sp-m { background: repeating-conic-gradient(#c020c8 0 25%, #c8c8c8 0 50%) 0 0 / 8px 8px; }
.sp-y { background: repeating-conic-gradient(#e8d800 0 25%, #c8c8c8 0 50%) 0 0 / 8px 8px; }
.sp-o { background: repeating-conic-gradient(#c8961c 0 25%, #c8c8c8 0 50%) 0 0 / 8px 8px; }
.lk::before {
  content: "";
  position: absolute;
  left: 3px;
  top: 0;
  width: 10px;
  height: 9px;
  background: radial-gradient(var(--h) 1.500px, #e8e8e8 2px);
  border: 1px solid #000;
  border-bottom: 0;
  border-radius: 5px 5px 0 0;
  box-shadow: 0 0 0 1px #fff;
}
.lk::after {
  content: "";
  position: absolute;
  left: 1px;
  top: 7px;
  width: 14px;
  height: 9px;
  background: linear-gradient(var(--h), var(--h)) center 3px / 2px 5px no-repeat, radial-gradient(circle at 50% 3px, var(--h) 2px, transparent 2.500px), #000;
  box-shadow: 0 0 0 1px #fff;
}

/* tkcon console */
.tkcon-win {
  position: absolute;
  left: 16px;
  top: 390px;
  width: 979px;
  height: 300px;
  display: flex;
  flex-direction: column;
  box-shadow: 0 -1px 6px rgba(0, 0, 0, 0.4);
  border-radius: 8px 8px 0 0;
}
.tk-title {
  height: 30px;
  background: linear-gradient(#5a5850, #3f3e3a);
}
.tk-title .win-btns {
  right: 6px;
}
.tk-name {
  font: bold 14px "Noto Sans", sans-serif;
  color: #e0ddd6;
  margin-top: -1px;
}
.tk-menu {
  height: 31px;
  flex: none;
  background: #d9d9d9;
  border-top: 1px solid #f6f6f6;
  border-left: 1px solid #f6f6f6;
  display: flex;
  align-items: center;
  gap: 13px;
  padding: 0 0 2px 6px;
  font-size: 13.300px;
  color: #111;
}
.tk-body {
  flex: 1;
  display: flex;
  background: #c8c8c8;
  border-top: 2px solid #222;
  border-left: 2px solid #222;
}
.tk-text {
  flex: 1;
  margin: 0;
  padding: 2px 0 0 1px;
  border-right: 2px solid #111;
  font: 13.300px/17px "DejaVu Sans Mono", monospace;
  color: #2200ee;
}
.tk-scroll {
  width: 12px;
  flex: none;
  background: #b4b4b4;
}
.tk-scroll svg {
  display: block;
}

/* virtualbox status bar */
.vbox-bar {
  height: 18px;
  flex: none;
  background: #f0f0f0;
  display: flex;
  align-items: center;
  justify-content: flex-end;
  gap: 2.500px;
  padding-right: 1px;
  position: relative;
}
.host-key {
  font: 11px "Liberation Sans", sans-serif;
  color: #111;
}
```
